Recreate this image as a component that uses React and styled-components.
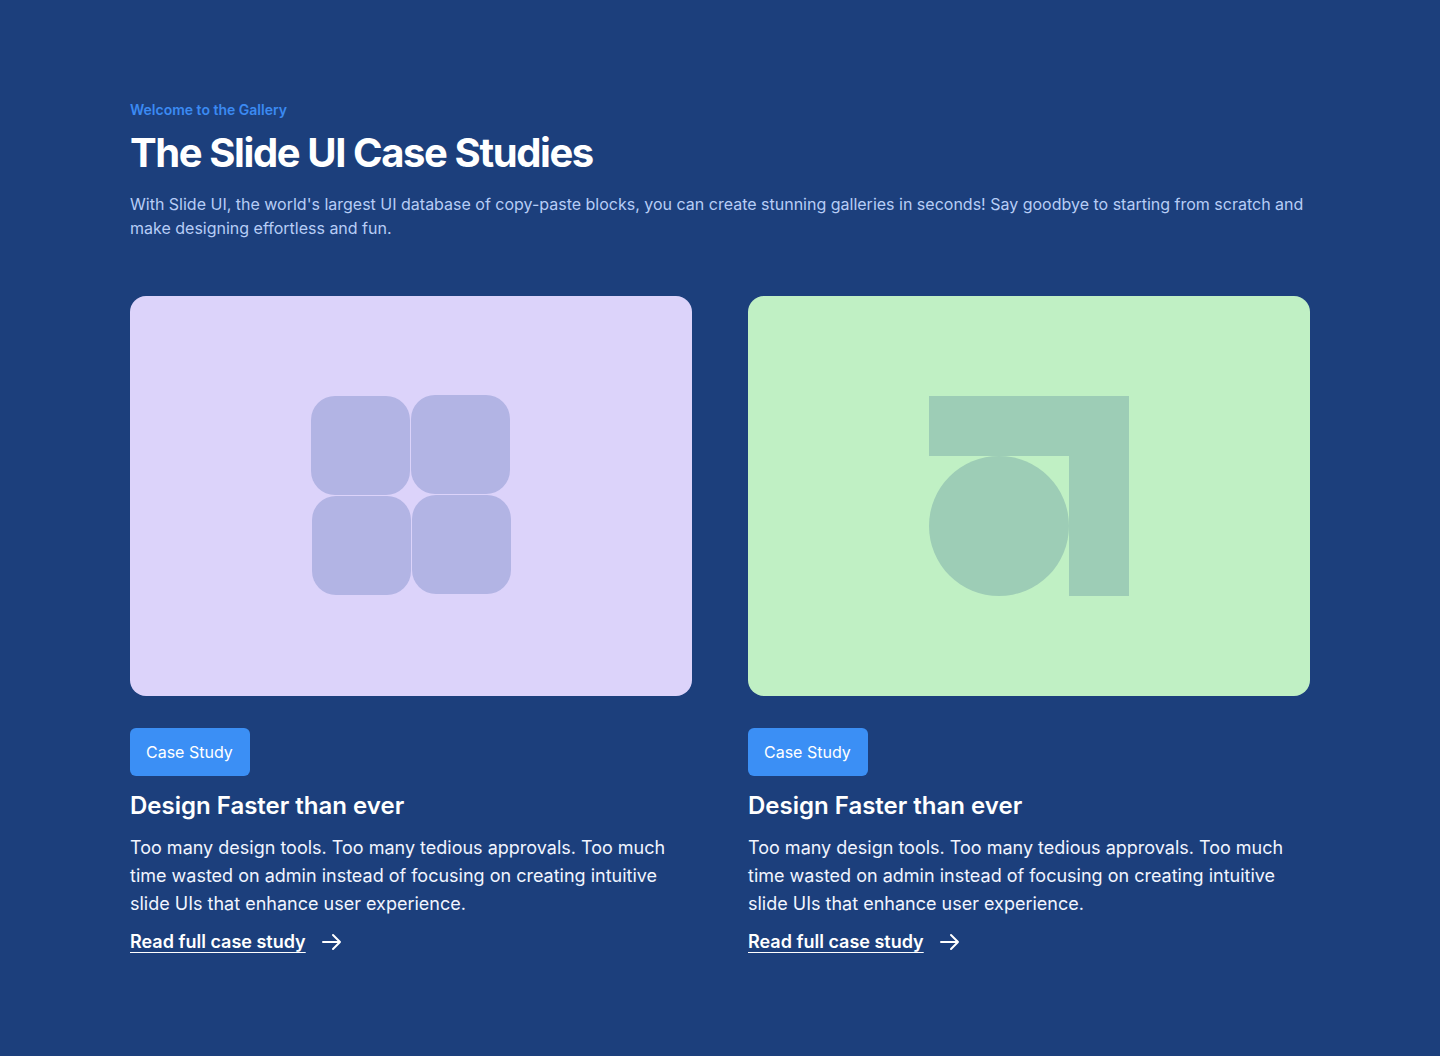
import React from "react";
import styled, { createGlobalStyle } from "styled-components";

const Global = createGlobalStyle`
  html, body { margin: 0; padding: 0; background: #1c3f7c; }
  body { font-family: Inter, "Noto Sans", sans-serif; -webkit-font-smoothing: antialiased; }
  * { box-sizing: border-box; }
`;

const Page = styled.main`
  min-height: 1056px;
  background: #1c3f7c;
  padding: 100px 130px 80px;
`;

const Header = styled.header`
  display: flex;
  flex-direction: column;
`;

const Eyebrow = styled.p`
  margin: 0;
  font-size: 14px;
  line-height: 20px;
  font-weight: 600;
  color: #3b8af2;
`;

const Title = styled.h1`
  margin: 9px 0 0;
  font-size: 40px;
  line-height: 48px;
  font-weight: 700;
  letter-spacing: -1.4px;
  color: #ffffff;
`;

const Lead = styled.p`
  margin: 15px 0 0;
  font-size: 16px;
  line-height: 24px;
  color: #b7cdf6;
`;

const Grid = styled.section`
  margin-top: 56px;
  display: grid;
  grid-template-columns: 1fr 1fr;
  column-gap: 56px;
`;

const Card = styled.article`
  display: flex;
  flex-direction: column;
  align-items: flex-start;
`;

const Media = styled.div`
  width: 100%;
  height: 400px;
  border-radius: 16px;
  background: ${(p) => p.$bg};
  display: flex;
  align-items: center;
  justify-content: center;
`;

const Badge = styled.span`
  margin-top: 32px;
  height: 48px;
  width: 120px;
  padding: 0 16px;
  display: inline-flex;
  align-items: center;
  border-radius: 6px;
  background: #3b8ff5;
  color: #fff;
  font-size: 16px;
`;

const CardTitle = styled.h2`
  margin: 14px 0 0;
  font-size: 24px;
  line-height: 32px;
  font-weight: 600;
  color: #fff;
`;

const Body = styled.p`
  margin: 12px 0 0;
  font-size: 18px;
  line-height: 28px;
  color: #f1f5ff;
`;

const Link = styled.a`
  margin-top: 10px;
  display: inline-flex;
  align-items: center;
  gap: 14px;
  font-size: 18px;
  line-height: 28px;
  font-weight: 600;
  color: #fff;
  text-decoration: none;
  cursor: pointer;
`;

const LinkText = styled.span`
  text-decoration: underline;
  text-underline-offset: 4px;
  text-decoration-thickness: 1px;
`;

const GridLogo = () => (
  <svg width="202" height="202" viewBox="0 0 202 202">
    <g fill="#b2b4e4">
      <rect x="1" y="1" width="99" height="99" rx="24" />
      <rect x="101" y="0" width="99" height="99" rx="24" />
      <rect x="2" y="101" width="99" height="99" rx="24" />
      <rect x="102" y="100" width="99" height="99" rx="24" />
    </g>
  </svg>
);

const ShapeLogo = () => (
  <svg width="200" height="200" viewBox="0 0 200 200">
    <g fill="#9dcdb6">
      <rect x="0" y="0" width="200" height="60" />
      <rect x="140" y="0" width="60" height="200" />
      <circle cx="70" cy="130" r="70" />
    </g>
  </svg>
);

const Arrow = () => (
  <svg width="24" height="24" viewBox="0 0 24 24" fill="none" stroke="#fff" strokeWidth="2" strokeLinecap="round" strokeLinejoin="round">
    <path d="M3 12h17M13 5l7 7-7 7" />
  </svg>
);

const cards = [
  { bg: "#dcd3fa", Logo: GridLogo },
  { bg: "#c0f0c4", Logo: ShapeLogo },
];

export default function App() {
  return (
    <>
      <Global />
      <Page>
        <Header>
          <Eyebrow>Welcome to the Gallery</Eyebrow>
          <Title>The Slide UI Case Studies</Title>
          <Lead>
            With Slide UI, the world's largest UI database of copy-paste blocks, you can create stunning galleries in seconds! Say goodbye to starting from scratch and make designing effortless and fun.
          </Lead>
        </Header>
        <Grid>
          {cards.map(({ bg, Logo }, i) => (
            <Card key={i}>
              <Media $bg={bg}>
                <Logo />
              </Media>
              <Badge>Case Study</Badge>
              <CardTitle>Design Faster than ever</CardTitle>
              <Body>
                Too many design tools. Too many tedious approvals. Too much time wasted on admin instead of focusing on creating intuitive slide UIs that enhance user experience.
              </Body>
              <Link>
                <LinkText>Read full case study</LinkText>
                <Arrow />
              </Link>
            </Card>
          ))}
        </Grid>
      </Page>
    </>
  );
}
